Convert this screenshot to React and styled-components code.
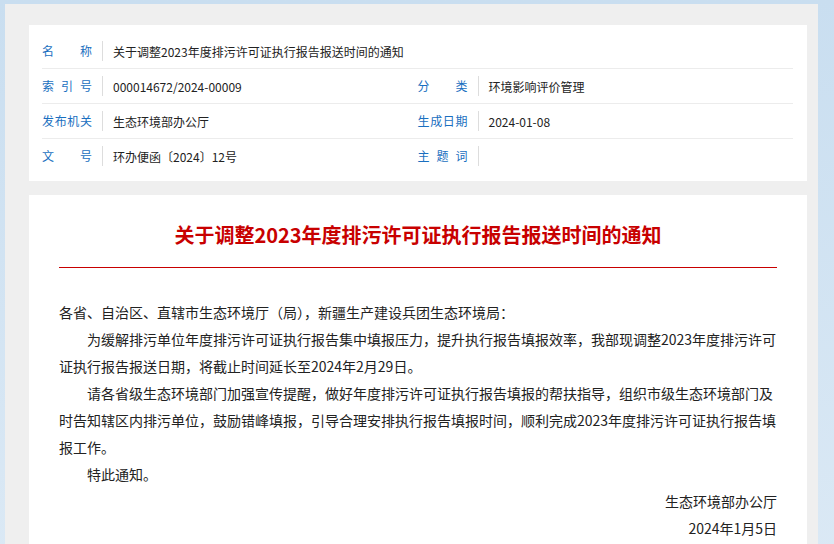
import React from "react";
import styled, { createGlobalStyle } from "styled-components";

const Global = createGlobalStyle`
  html, body { margin: 0; padding: 0; }
  body { background: linear-gradient(180deg, #c9def0, #dbe9f5); font-family: "Microsoft YaHei", "Noto Sans CJK SC", sans-serif; }
`;

const Frame = styled.div`
  margin: 4px 16px 0 5px;
  background: #efefef;
  padding: 21px 11px 0 24px;
  min-height: 540px;
  box-sizing: border-box;
`;

const Card = styled.div`
  background: #fff;
  padding: ${p => p.$pad};
  margin-bottom: 14px;
`;

const Grid = styled.div`
  display: grid;
  grid-template-columns: 1fr 1fr;
`;

const Row = styled.div`
  display: flex;
  align-items: center;
  height: 34px;
  border-bottom: ${p => (p.$last ? "none" : "1px solid #ececec")};
  grid-column: ${p => (p.$full ? "1 / 3" : "auto")};
  font-size: 12px;
`;

const Label = styled.div`
  width: 50px;
  color: #1a6fc0;
  text-align-last: justify;
  padding-right: 10px;
  border-right: 1px solid #ddd;
  line-height: 20px;
  flex-shrink: 0;
`;

const Value = styled.div`
  padding-left: 10px;
  color: #222;
`;

const Title = styled.h1`
  margin: 0;
  text-align: center;
  color: #c80000;
  font-size: 20px;
  font-weight: bold;
  line-height: 30px;
  padding-bottom: 17px;
  border-bottom: 1px solid #c80000;
`;

const Body = styled.div`
  padding-top: 31px;
  font-size: 14px;
  line-height: 27px;
  color: #222;
`;

const P = styled.p`
  margin: 0;
  text-indent: ${p => (p.$indent ? "2em" : "0")};
  text-align: ${p => (p.$right ? "right" : "left")};
`;

export default function App() {
  return (
    <>
      <Global />
      <Frame>
        <Card $pad="9px 14px 8px 13px">
          <Grid>
            <Row $full><Label>名称</Label><Value>关于调整2023年度排污许可证执行报告报送时间的通知</Value></Row>
            <Row><Label>索引号</Label><Value>000014672/2024-00009</Value></Row>
            <Row><Label>分类</Label><Value>环境影响评价管理</Value></Row>
            <Row><Label>发布机关</Label><Value>生态环境部办公厅</Value></Row>
            <Row><Label>生成日期</Label><Value>2024-01-08</Value></Row>
            <Row $last><Label>文号</Label><Value>环办便函〔2024〕12号</Value></Row>
            <Row $last><Label>主题词</Label><Value></Value></Row>
          </Grid>
        </Card>
        <Card $pad="25px 30px 10px 30px">
          <Title>关于调整2023年度排污许可证执行报告报送时间的通知</Title>
          <Body>
            <P>各省、自治区、直辖市生态环境厅（局），新疆生产建设兵团生态环境局：</P>
            <P $indent>为缓解排污单位年度排污许可证执行报告集中填报压力，提升执行报告填报效率，我部现调整2023年度排污许可证执行报告报送日期，将截止时间延长至2024年2月29日。</P>
            <P $indent>请各省级生态环境部门加强宣传提醒，做好年度排污许可证执行报告填报的帮扶指导，组织市级生态环境部门及时告知辖区内排污单位，鼓励错峰填报，引导合理安排执行报告填报时间，顺利完成2023年度排污许可证执行报告填报工作。</P>
            <P $indent>特此通知。</P>
            <P $right>生态环境部办公厅</P>
            <P $right>2024年1月5日</P>
          </Body>
        </Card>
      </Frame>
    </>
  );
}
